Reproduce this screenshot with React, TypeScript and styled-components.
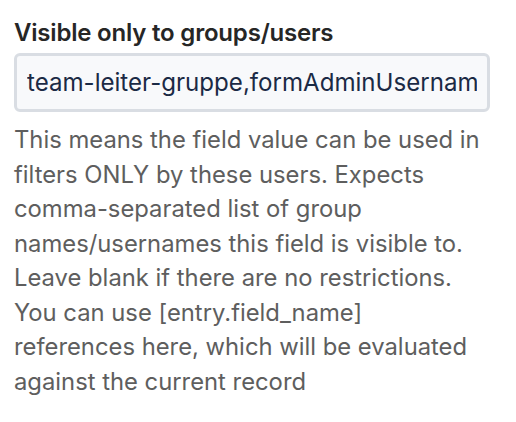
import React from "react";
import styled, { createGlobalStyle } from "styled-components";

const Global = createGlobalStyle`
  html, body { margin: 0; padding: 0; background: #ffffff; }
  body { font-family: Inter, "Noto Sans", "Liberation Sans", sans-serif; -webkit-font-smoothing: antialiased; }
`;

const Field = styled.div`
  width: 476px;
  padding: 18px 0 0 14px;
  display: flex;
  flex-direction: column;
`;

const Label = styled.label`
  font-size: 24px;
  font-weight: 600;
  line-height: 30px;
  color: #262626;
  letter-spacing: -0.2px;
  margin-bottom: 5px;
`;

const Input = styled.input`
  box-sizing: border-box;
  width: 476px;
  height: 59px;
  border: 3px solid #d9dde3;
  border-radius: 6px;
  background: #f8f9fb;
  padding: 0 10px;
  font-family: inherit;
  font-size: 24.1px;
  color: #1b2a45;
  outline: none;
`;

const Help = styled.p`
  width: 468px;
  margin: 11px 0 0;
  font-size: 23.8px;
  line-height: 34.5px;
  color: #5e5e5e;
`;

export default function App() {
  return (
    <>
      <Global />
      <Field>
        <Label>Visible only to groups/users</Label>
        <Input readOnly value="team-leiter-gruppe,formAdminUsernam" />
        <Help>
          This means the field value can be used in filters ONLY by these users. Expects
          comma-separated list of group names/usernames this field is visible to. Leave blank if
          there are no restrictions. You can use [entry.field_name] references here, which will be
          evaluated against the current record
        </Help>
      </Field>
    </>
  );
}
